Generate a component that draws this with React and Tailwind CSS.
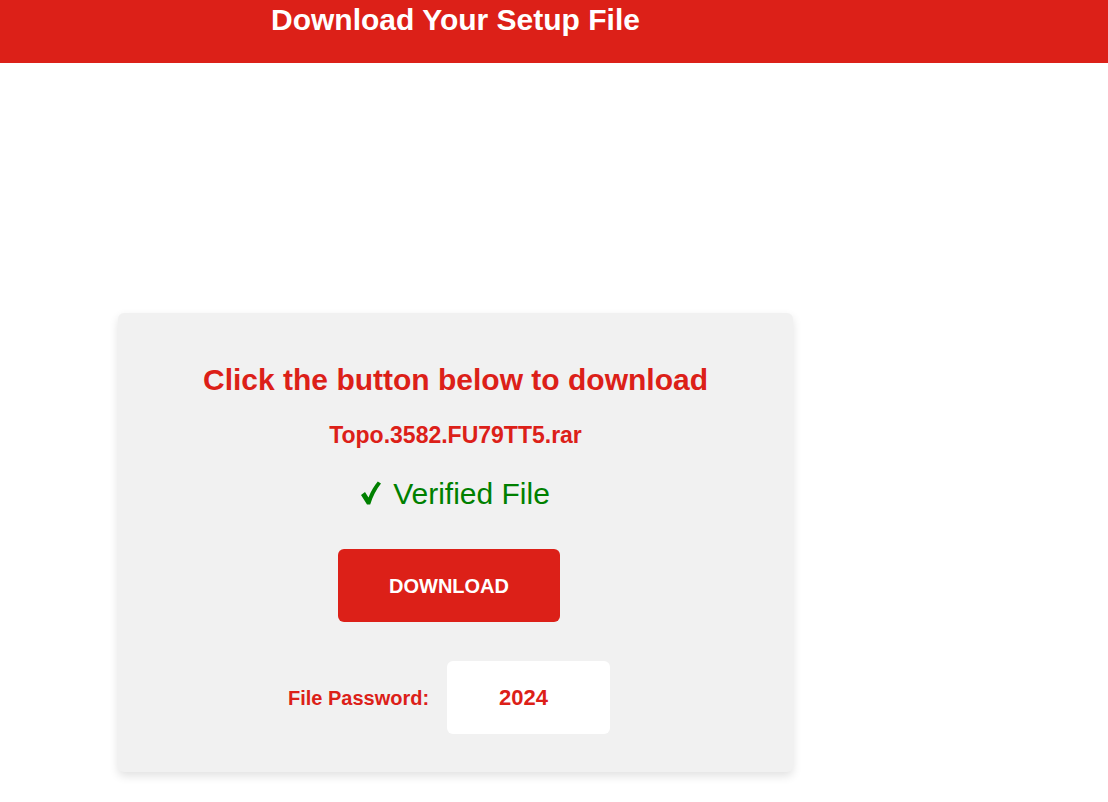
import React from 'react';

const RED = 'text-[#dc2018]';

// Heavy tick in front of "Verified File"
const Tick = () => (
    <svg width="20" height="24" viewBox="0 0 20 24" className="shrink-0">
        <path d="M0 14 L4 11 L7.5 16.5 C10 10 13.5 4.5 16.8 0.5 L20 2.5 C15.5 8 11.8 15 9.2 23.5 L6 23.5 Z" fill="#008000" />
    </svg>
);

export default function App() {
    return (
        <div className="min-h-[802px] bg-white font-['Liberation_Sans',Arial,sans-serif]">
            {/* Top bar */}
            <header className="h-[63px] bg-[#dc2018]">
                <div className="ml-[118px] w-[675px] pt-[3px] text-center">
                    <h1 className="text-[30px] font-bold leading-[34px] text-white">Download Your Setup File</h1>
                </div>
            </header>

            {/* Download card */}
            <main className="ml-[118px] mt-[250px] w-[675px]">
                <div className="flex flex-col items-center rounded-[6px] bg-[#f1f1f1] pt-[51px] pb-[38px] shadow-[0_4px_10px_rgba(0,0,0,0.12)]">
                    <h2 className={`text-[30px] font-bold leading-[32px] ${RED}`}>Click the button below to download</h2>

                    <p className={`mt-[27px] text-[23px] font-bold leading-[25px] ${RED}`}>Topo.3582.FU79TT5.rar</p>

                    <p className="mt-[30px] flex items-end gap-[12px] text-[30px] leading-[32px] text-[#008000]">
                        <span className="mb-[5px]"><Tick /></span>
                        <span>Verified File</span>
                    </p>

                    <button className="mt-[39px] mr-[13px] flex h-[73px] w-[222px] items-center justify-center rounded-[6px] bg-[#dc2018] text-[20px] font-bold text-white">
                        DOWNLOAD
                    </button>

                    <div className="mt-[39px] mr-[13px] flex items-center gap-[18px]">
                        <span className={`text-[20px] font-bold ${RED}`}>File Password:</span>
                        <div className={`flex h-[73px] w-[163px] items-center justify-center rounded-[6px] bg-white pr-[10px] text-[22px] font-bold ${RED}`}>
                            2024
                        </div>
                    </div>
                </div>
            </main>
        </div>
    );
}
